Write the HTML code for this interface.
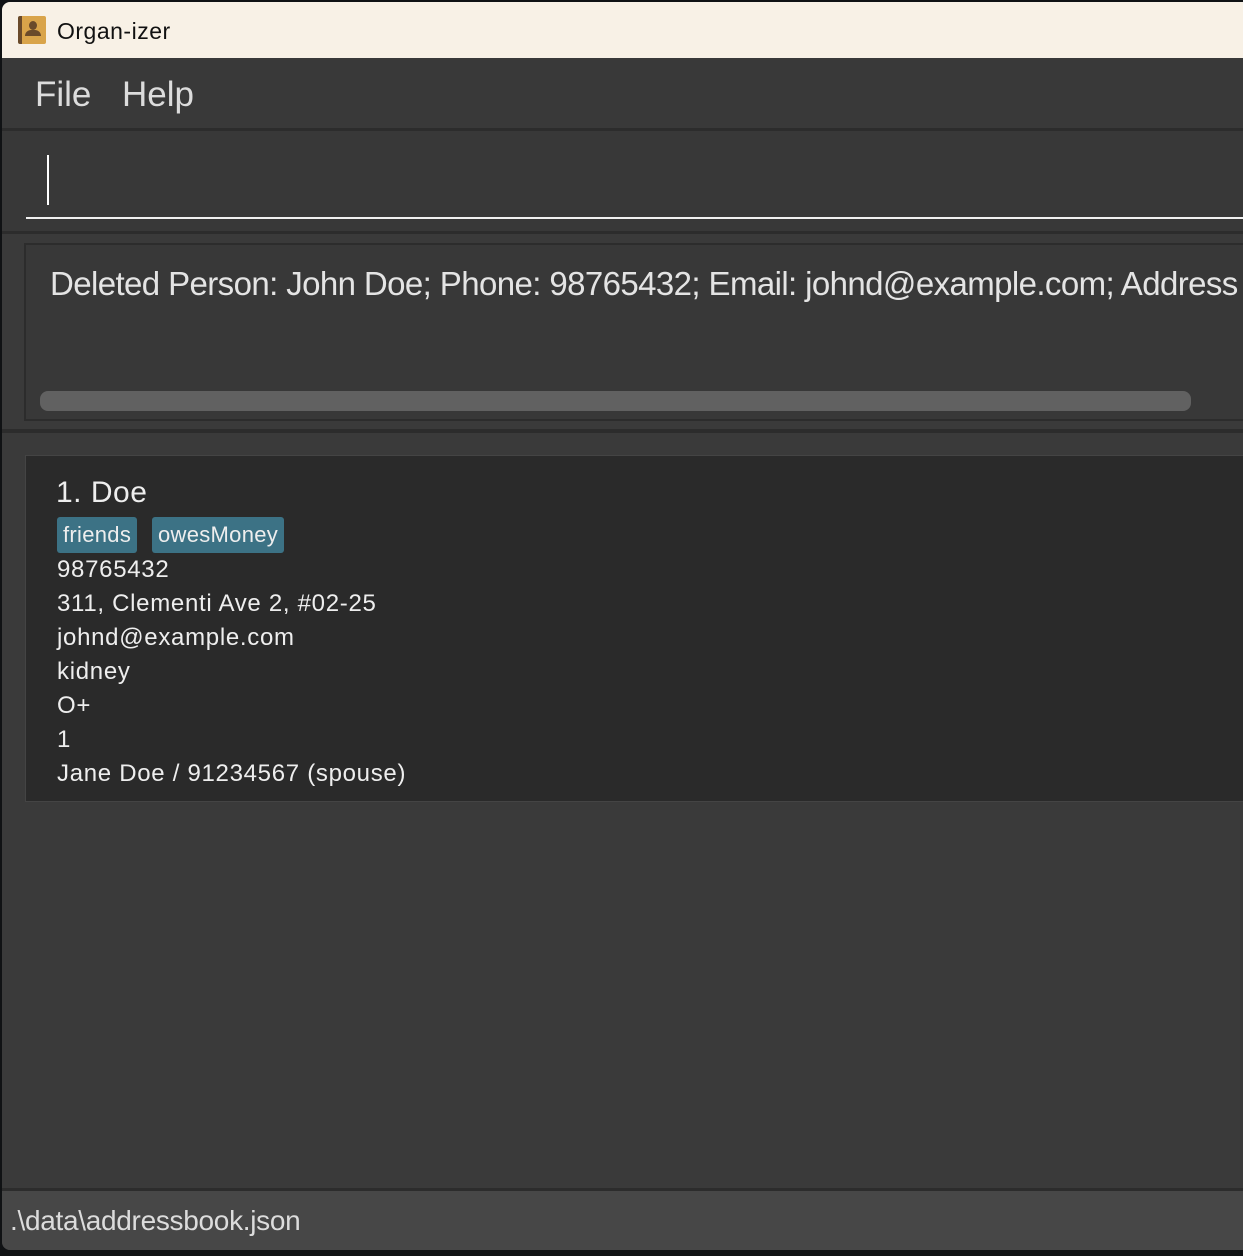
<!DOCTYPE html>
<html><head><style>
*{margin:0;padding:0;box-sizing:border-box}
body{width:1243px;height:1256px;background:#101214;position:relative;overflow:hidden;font-family:"Liberation Sans",sans-serif}
.win{position:absolute;left:2px;top:2px;width:1241px;height:1248px;background:#3a3a3a;border-radius:8px 0 0 8px;overflow:hidden}
.title{position:absolute;left:0;top:0;width:100%;height:56px;background:#f8f1e6}
.title span{position:absolute;left:55px;top:16px;font-size:23px;letter-spacing:0.5px;color:#111}
.icon{position:absolute;left:16px;top:14px;width:28px;height:28px;background:#d9a44a;border-left:4px solid #6a4a2a;border-radius:2px}
.icon:after{content:"";position:absolute;left:7px;top:5px;width:8px;height:9px;background:#6a4a2a;border-radius:50%}
.icon:before{content:"";position:absolute;left:3px;top:14px;width:16px;height:6px;background:#6a4a2a;border-radius:6px 6px 0 0}
.menu{position:absolute;top:56px;left:0;width:100%;height:70px;background:#393939}
.menu span{position:absolute;top:17px;font-size:35px;color:#dcdcdc}
.cmd{position:absolute;top:126px;left:0;width:100%;height:106px;background:#383838;border-top:3px solid #2c2c2c;border-bottom:3px solid #2c2c2c}
.res{position:absolute;top:241px;left:22px;width:1230px;height:178px;background:#383838;border:2px solid #2c2c2c}
.res .t{position:absolute;left:24px;top:20px;font-size:33px;letter-spacing:-0.6px;color:#e4e4e4;white-space:nowrap}
.res .sb{position:absolute;left:14px;top:146px;width:1151px;height:20px;background:#616161;border-radius:8px}
.sep{position:absolute;top:427px;left:0;width:100%;height:4px;background:#2c2c2c}
.card{position:absolute;left:23px;top:453px;width:1230px;height:347px;background:#2a2a2a;border:1px solid #444}
.card .n{position:absolute;left:30px;top:20px;font-size:30px;color:#eee;letter-spacing:0.5px}
.tag{position:absolute;top:61px;height:36px;background:#3c7285;color:#eee;font-size:22px;line-height:36px;padding:0 6px;border-radius:3px;letter-spacing:0.3px}
.card .l{position:absolute;left:31px;font-size:24px;color:#eee;letter-spacing:0.7px}
.status{position:absolute;top:1186px;left:0;width:100%;height:62px;background:#474747;border-top:3px solid #2c2c2c}
.status span{position:absolute;left:8px;top:14px;font-size:28px;color:#dcdcdc;letter-spacing:-0.3px}
</style></head><body>
<div class="win">
<div class="title"><div class="icon"></div><span>Organ-izer</span></div>
<div class="menu"><span style="left:33px">File</span><span style="left:120px">Help</span></div>
<div class="cmd"><div style="position:absolute;left:45px;top:24px;width:2px;height:50px;background:#fff"></div><div style="position:absolute;left:24px;top:86px;width:1230px;height:2px;background:#f0f0f0"></div></div>
<div class="res"><div class="t">Deleted Person: John Doe; Phone: 98765432; Email: johnd@example.com; Address</div><div class="sb"></div></div>
<div class="sep"></div>
<div class="card">
<div class="n">1. Doe</div>
<div class="tag" style="left:31px">friends</div><div class="tag" style="left:126px">owesMoney</div>
<div class="l" style="top:100px">98765432</div>
<div class="l" style="top:134px">311, Clementi Ave 2, #02-25</div>
<div class="l" style="top:168px">johnd@example.com</div>
<div class="l" style="top:202px">kidney</div>
<div class="l" style="top:236px">O+</div>
<div class="l" style="top:270px">1</div>
<div class="l" style="top:304px">Jane Doe / 91234567 (spouse)</div>
</div>
<div class="status"><span>.\data\addressbook.json</span></div>
</div>
</body></html>
